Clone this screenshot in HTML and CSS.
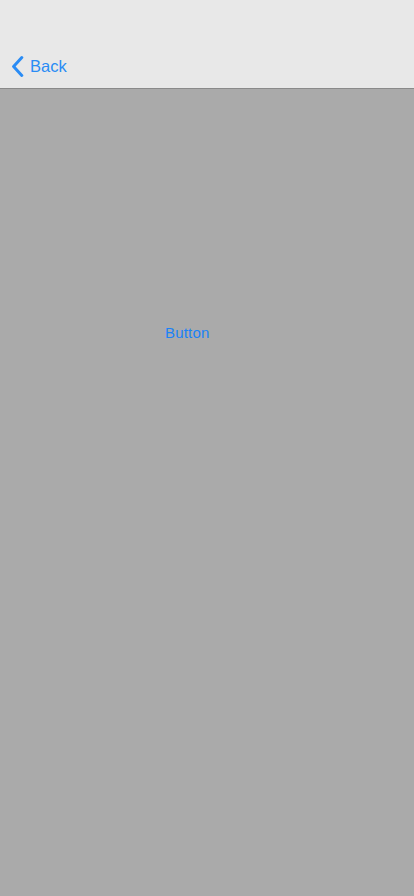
FILE: index.html
```html
<!DOCTYPE html>
<html>
<head>
<meta charset="utf-8">
<link rel="stylesheet" href="styles.css">
</head>
<body>
<header class="navbar">
  <a class="back">
    <svg class="chev" width="14" height="22" viewBox="0 0 14 22"><path d="M11.8 2.6 L3.6 11.5 L11.8 20.4" fill="none" stroke="#2a8cf5" stroke-width="3" stroke-linecap="round" stroke-linejoin="round"/></svg>
    <span>Back</span>
  </a>
</header>
<main class="content">
  <span class="btn">Button</span>
</main>
</body>
</html>
```
FILE: styles.css
```css
html, body { margin: 0; padding: 0; }
body {
  width: 414px;
  height: 896px;
  font-family: "Liberation Sans", Arial, sans-serif;
  background: #aaaaaa;
  display: flex;
  flex-direction: column;
}
.navbar {
  height: 89px;
  box-sizing: border-box;
  background: #e8e8e8;
  border-bottom: 1px solid #8a8a8a;
  display: flex;
  align-items: flex-end;
  padding: 0 0 11px 10px;
}
.back {
  display: flex;
  align-items: center;
  gap: 6px;
  color: #2a8cf5;
  font-size: 16.5px;
}
.chev { display: block; }
.content {
  flex: 1;
  padding-top: 235px;
  padding-left: 165px;
}
.btn {
  color: #1a82f7;
  font-size: 15px;
  letter-spacing: 0.2px;
}
```
